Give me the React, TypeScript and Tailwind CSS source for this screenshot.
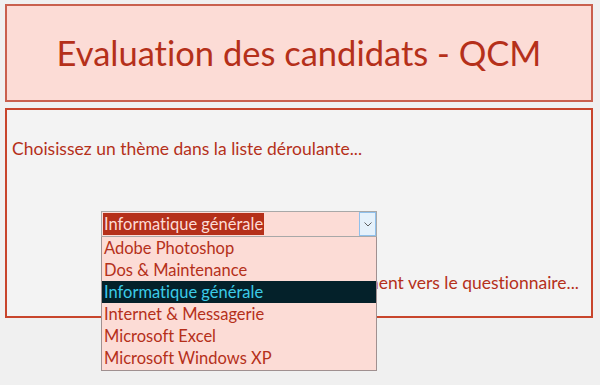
import React from "react";

const themes = [
  "Adobe Photoshop",
  "Dos & Maintenance",
  "Informatique générale",
  "Internet & Messagerie",
  "Microsoft Excel",
  "Microsoft Windows XP",
];

export default function App() {
  const selected = "Informatique générale";

  return (
    <div className="relative h-[385px] w-[600px] overflow-hidden bg-[#f0f0f0] pt-[4px] pl-[5px] font-['Lato',sans-serif] text-[#b5301a] [font-variant-ligatures:none]">
      {/* En-tête */}
      <div className="flex h-[98px] w-[588px] items-center justify-center border-2 border-[#c9604e] bg-[#fcdcd6]">
        <h1 className="text-[34.5px] leading-none">Evaluation des candidats - QCM</h1>
      </div>

      {/* Zone de sélection */}
      <div className="mt-[6px] flex h-[210px] w-[588px] flex-col border-2 border-[#c8452c] bg-[#f3f3f3]">
        <p className="mt-[26px] pl-[5px] text-[17.5px]">Choisissez un thème dans la liste déroulante...</p>
        <p className="mt-auto mb-[20px] pr-[12px] text-right text-[17.5px]">
          Vous serez redirigé automatiquement vers le questionnaire...
        </p>
      </div>

      {/* Liste déroulante ouverte */}
      <div className="absolute left-[101px] top-[211px] w-[276px]">
        <div className="flex h-[26px] items-stretch border border-[#a8a8a8] bg-[#fcdcd6]">
          <div className="flex flex-1 items-center pl-[1px]">
            <span className="bg-[#b5301a] px-[1px] text-[16.5px] leading-[22px] text-[#fcdcd6]">{selected}</span>
          </div>
          <div className="flex w-[17px] items-center justify-center border border-[#8fc0ec] bg-[#e5f1fb]">
            <svg width="8" height="5" viewBox="0 0 8 5" fill="none">
              <path d="M0.5 0.5 L4 4 L7.5 0.5" stroke="#606060" strokeWidth="1" />
            </svg>
          </div>
        </div>
        <ul className="h-[134px] border border-t-0 border-[#a09090] bg-[#fcdcd6]">
          {themes.map((t) => (
            <li
              key={t}
              className={
                t === selected
                  ? "h-[22px] bg-[#04212a] pl-[2px] text-[16.5px] leading-[22px] text-[#3ccbe8]"
                  : "h-[22px] pl-[2px] text-[16.5px] leading-[22px]"
              }
            >
              {t}
            </li>
          ))}
        </ul>
      </div>
    </div>
  );
}
